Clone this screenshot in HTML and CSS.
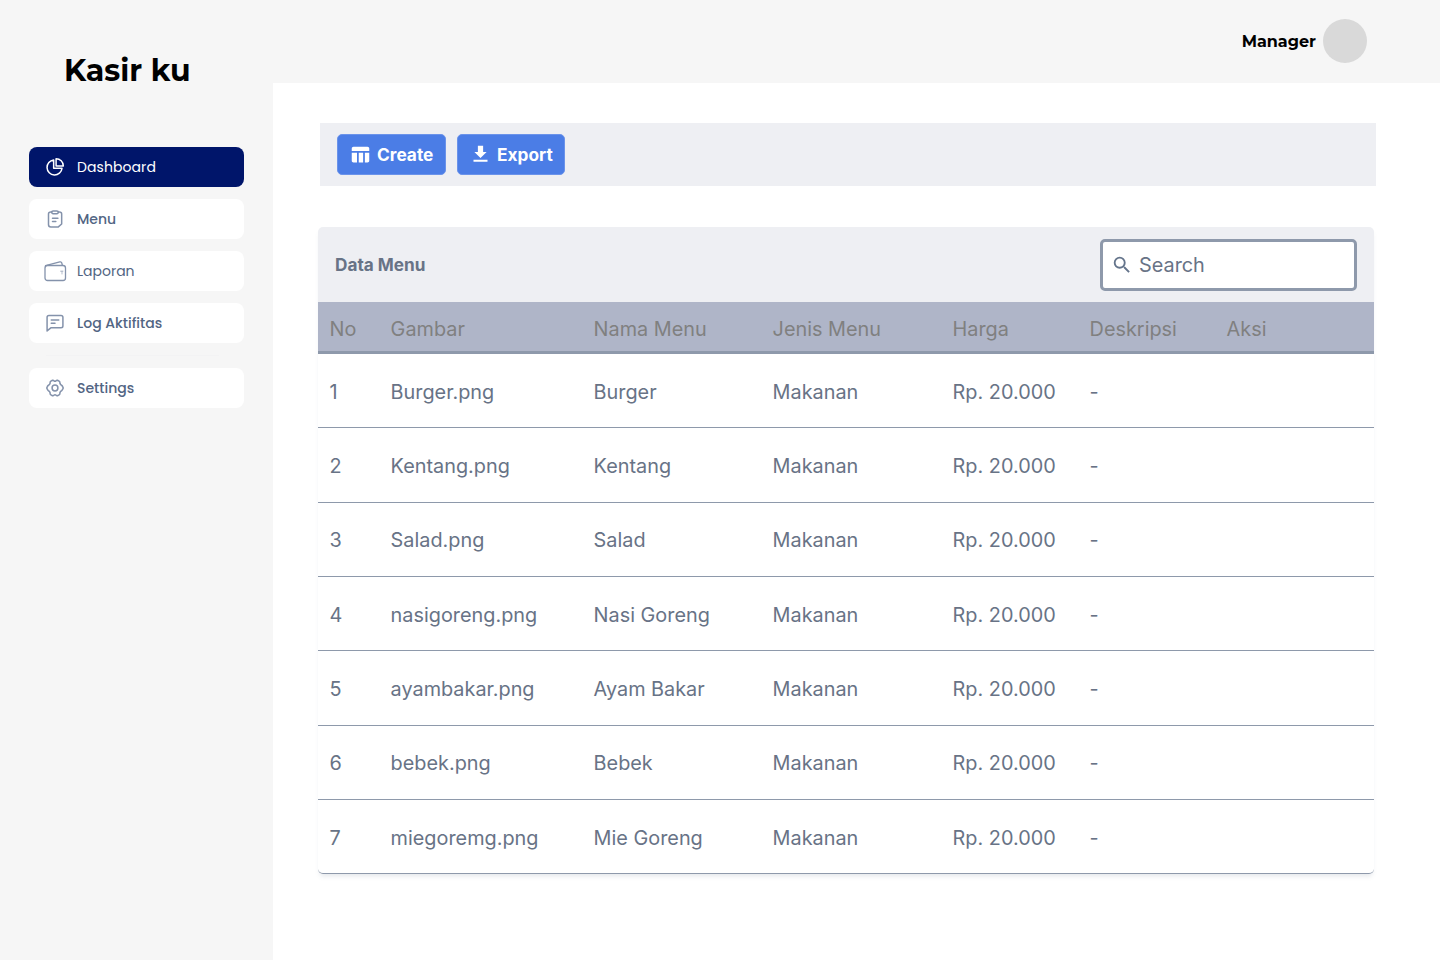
FILE: index.html
```html
<!DOCTYPE html>
<html lang="id">
<head>
<meta charset="utf-8">
<title>Kasir ku</title>
<link rel="stylesheet" href="styles.css">
</head>
<body>
<div class="app">
  <aside class="sidebar">
    <h1 class="brand">Kasir ku</h1>
    <nav class="nav">
      <a class="nav-item active">
        <svg class="nav-icon" viewBox="0 0 24 24"><path d="M10.400 3.600A9 9 0 1 0 20.400 13.600H10.400Z"/><path d="M13.300 2V10.700H22A8.800 8.800 0 0 0 13.300 2Z"/></svg>
        <span class="label-dashboard">Dashboard</span>
      </a>
      <a class="nav-item">
        <svg class="nav-icon" viewBox="0 0 24 24"><path d="M8 3.500H7Q4.200 3.500 4.200 6V18.500Q4.200 21.500 7 21.500H16L20 18V6Q20 3.500 17.200 3.500H16"/><rect x="8" y="2.300" width="8" height="3.400" rx="1.700"/><path d="M9 11H15.500M9 15H13"/></svg>
        <span class="label-menu">Menu</span>
      </a>
      <a class="nav-item">
        <svg class="nav-icon wallet" viewBox="0 0 24 24"><rect x="2" y="6.500" width="20.500" height="15" rx="2.500"/><path d="M2.500 6.700L16.800 2.900Q18.400 2.500 18.800 4L19.300 6.200"/><path class="thin" d="M17.500 12.200H20M19 12.200V15"/></svg>
        <span class="label-laporan">Laporan</span>
      </a>
      <a class="nav-item">
        <svg class="nav-icon" viewBox="0 0 24 24"><path d="M2.500 21.500V5Q2.500 2.900 4.800 2.900H19.200Q21.500 2.900 21.500 5V15.700Q21.500 17.800 19.200 17.800H7Z"/><path d="M7.500 8.500H16.500M7.500 12.300H12"/></svg>
        <span class="label-log">Log Aktifitas</span>
      </a>
      <hr class="divider">
      <a class="nav-item">
        <svg class="nav-icon" viewBox="0 0 24 24"><path d="M9 2.700Q10.200 2.500 10.800 3.400Q12 4.400 13.200 3.400Q13.800 2.500 15 2.700L17.300 4Q18.100 4.600 17.900 6.300Q18.300 8 19.900 8.700Q20.900 9.300 21.900 12Q20.900 14.700 19.900 15.300Q18.300 16 17.900 17.700Q18.100 19.400 17.300 20L15 21.300Q13.800 21.500 13.200 20.600Q12 19.600 10.800 20.600Q10.200 21.500 9 21.300L6.700 20Q5.900 19.400 6.100 17.700Q5.700 16 4.100 15.300Q3.100 14.700 2.100 12Q3.100 9.300 4.100 8.700Q5.700 8 6.100 6.300Q5.900 4.600 6.700 4Z"/><circle cx="12" cy="12" r="3.500"/></svg>
        <span class="label-settings">Settings</span>
      </a>
    </nav>
  </aside>
  <div class="main">
    <header class="topbar"><span class="user">Manager</span><span class="avatar"></span></header>
    <main class="content">
      <div class="toolbar">
        <button class="btn create">
          <svg class="btn-icon" viewBox="0 0 24 24"><path d="M10 10.020h5V21h-5V10.020zM17 21h3c1.100 0 2-.900 2-2v-9h-5v11zM20 3H4c-1.100 0-2 .900-2 2v3h20V5c0-1.100-.900-2-2-2zM2 19c0 1.100.900 2 2 2h4V10H2v9z"/></svg>
          <span>Create</span>
        </button>
        <button class="btn export">
          <svg class="btn-icon" viewBox="0 0 24 24"><path d="M19 9h-4V2H9v7H5l7 7 7-7zM4 18v2.300h16V18H4z"/></svg>
          <span>Export</span>
        </button>
      </div>
      <section class="card">
        <div class="card-head">
          <h2>Data Menu</h2>
          <div class="search">
            <svg viewBox="0 0 24 24"><path d="M15.500 14h-.790l-.280-.270A6.470 6.470 0 0 0 16 9.500 6.500 6.500 0 1 0 9.500 16c1.610 0 3.090-.590 4.230-1.570l.270.280v.790l5 4.990L20.490 19l-4.990-5zm-6 0C7.010 14 5 11.990 5 9.500S7.010 5 9.500 5 14 7.010 14 9.500 11.990 14 9.500 14z"/></svg>
            <span>Search</span>
          </div>
        </div>
        <div class="row head"><span>No</span><span>Gambar</span><span>Nama Menu</span><span>Jenis Menu</span><span>Harga</span><span>Deskripsi</span><span>Aksi</span></div>
        <div class="row"><span>1</span><span>Burger.png</span><span>Burger</span><span>Makanan</span><span>Rp. 20.000</span><span>-</span></div>
        <div class="row"><span>2</span><span>Kentang.png</span><span>Kentang</span><span>Makanan</span><span>Rp. 20.000</span><span>-</span></div>
        <div class="row"><span>3</span><span>Salad.png</span><span>Salad</span><span>Makanan</span><span>Rp. 20.000</span><span>-</span></div>
        <div class="row"><span>4</span><span>nasigoreng.png</span><span>Nasi Goreng</span><span>Makanan</span><span>Rp. 20.000</span><span>-</span></div>
        <div class="row"><span>5</span><span>ayambakar.png</span><span>Ayam Bakar</span><span>Makanan</span><span>Rp. 20.000</span><span>-</span></div>
        <div class="row"><span>6</span><span>bebek.png</span><span>Bebek</span><span>Makanan</span><span>Rp. 20.000</span><span>-</span></div>
        <div class="row"><span>7</span><span>miegoremg.png</span><span>Mie Goreng</span><span>Makanan</span><span>Rp. 20.000</span><span>-</span></div>
      </section>
    </main>
  </div>
</div>
</body>
</html>
```

FILE: styles.css
```css
* { box-sizing: border-box; }
body { margin: 0; background: #f6f6f6; font-family: Inter, sans-serif; color: #687386; }
.app { display: flex; width: 1440px; height: 960px; overflow: hidden; }
.sidebar { width: 273px; padding: 51px 29px 0; flex: none; }
.brand { margin: 0 0 56px 35px; height: 40px; font: 700 30px/40px Montserrat, Inter, sans-serif; color: #000; white-space: nowrap; }
.nav { display: flex; flex-direction: column; gap: 12px; }
.nav-item { display: flex; align-items: center; gap: 12px; height: 40px; padding-left: 16px; border-radius: 8px; background: #fff; font: 500 14px/20px Poppins, "Open Sans", sans-serif; color: #526583; }
.nav-item.active { background: #00156a; color: #fff; }
.divider { width: 173px; height: 1px; margin: 0 0 0 17px; border: 0; background: #f3f3f4; }
.nav-icon { width: 20px; height: 20px; fill: none; stroke: #8492ab; stroke-width: 1.8; stroke-linecap: round; stroke-linejoin: round; }
.active .nav-icon { stroke: #fff; }
.nav-icon.wallet { width: 24px; height: 24px; margin: 0 -2px; stroke-width: 1.300; }
.thin { stroke-width: .600; }
.label-dashboard { font-weight: 400; letter-spacing: .08px; }
.label-laporan { font-weight: 400; }
.main { flex: 1; display: flex; flex-direction: column; }
.topbar { height: 83px; flex: none; display: flex; justify-content: flex-end; align-items: center; gap: 7px; padding: 0 73px 1px 0; }
.user { padding-top: 2px; font: 700 16px/20px Montserrat, Inter, sans-serif; color: #000; }
.avatar { width: 44px; height: 44px; border-radius: 50%; background: #d9d9d9; }
.content { flex: 1; background: #fff; padding: 40px 64px 0 45px; }
.toolbar { display: flex; gap: 11px; width: 1056px; height: 63px; margin-left: 2px; padding: 11px 17px; background: #eeeff3; }
.btn { display: flex; align-items: center; gap: 6px; height: 41px; padding: 0 0 0 12px; border: 1px solid #6b93ea; border-radius: 5px; background: #4b7de6; color: #fff; font: 650 17.300px/24px Inter, sans-serif; }
.btn.create { width: 109px; }
.btn.export { width: 108px; }
.btn-icon { width: 21px; height: 21px; fill: #fff; }
.card { width: 1056px; margin-top: 41px; border-radius: 5px; box-shadow: 0 4px 5px -2px rgba(100, 116, 139, .18); }
.card-head { display: flex; justify-content: space-between; align-items: center; height: 75px; padding: 0 17px; background: #eeeff3; border-radius: 5px 5px 0 0; }
.card-head h2 { margin: 0; font: 650 17.200px/24px Inter, sans-serif; }
.search { display: flex; align-items: center; gap: 7px; width: 257px; height: 52px; padding-left: 8px; border: 3px solid #8e99ab; border-radius: 5px; background: #fff; font-size: 19.850px; }
.search svg { width: 22px; height: 22px; margin-right: -1px; fill: #64748b; }
.row { display: grid; grid-template-columns: 61px 203px 179px 180px 137px 137px 1fr; align-items: center; height: 74.330px; padding: 2px 0 0 11.600px; border-bottom: 1.500px solid #8e99ab; font-size: 19.850px; line-height: 26px; }
.row.head { height: 52px; padding-top: 4px; border-bottom-width: 3px; background: #afb5c8; color: #808080; }
.row:last-child { border-radius: 0 0 5px 5px; }
```
